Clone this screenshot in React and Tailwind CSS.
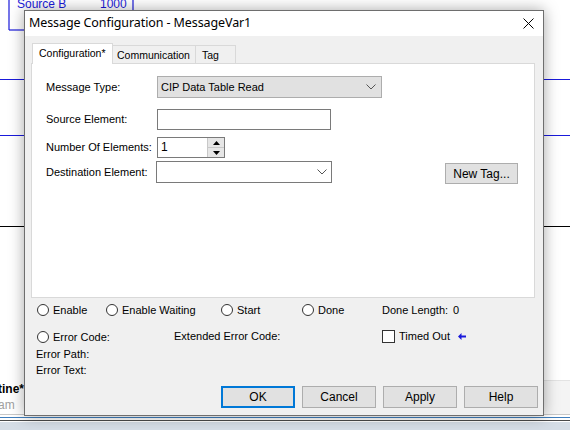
import React from 'react';

const Radio = () => (
  <span className="inline-block w-[12px] h-[12px] rounded-full border border-[#333] bg-white shrink-0" />
);

const Chevron = () => (
  <svg width="10" height="6" viewBox="0 0 10 6" className="shrink-0">
    <path d="M0.5 0.5 L5 5 L9.5 0.5" fill="none" stroke="#555" strokeWidth="1" />
  </svg>
);

const Btn = ({ children, focused }) => (
  <button
    className={`w-[74px] h-[22px] bg-[#e1e1e1] text-[12px] text-black ${
      focused ? 'border-2 border-[#0078d7]' : 'border border-[#adadad]'
    }`}
  >
    {children}
  </button>
);

const Background = () => (
  <>
    <svg className="absolute inset-0" width="570" height="430">
      <line x1="9" y1="0" x2="9" y2="30" stroke="#1a1adb" strokeWidth="1.2" />
      <line x1="9" y1="30" x2="30" y2="30" stroke="#1a1adb" strokeWidth="1.2" />
      <line x1="133" y1="0" x2="133" y2="12" stroke="#1a1adb" strokeWidth="1.2" />
      <line x1="0" y1="79.5" x2="570" y2="79.5" stroke="#1a1adb" strokeWidth="1" />
      <line x1="0" y1="135.5" x2="570" y2="135.5" stroke="#1a1adb" strokeWidth="1" />
      <line x1="0" y1="226.5" x2="570" y2="226.5" stroke="#000" strokeWidth="1" />
      <line x1="543" y1="380.5" x2="570" y2="380.5" stroke="#e3e3e3" strokeWidth="1" />
      <rect x="543" y="381" width="27" height="33" fill="#f4f4f4" />
      <line x1="0" y1="414.5" x2="570" y2="414.5" stroke="#c8c8c8" strokeWidth="1" />
      <line x1="0" y1="417.5" x2="570" y2="417.5" stroke="#3f7ebd" strokeWidth="1" />
      <line x1="0" y1="420.5" x2="570" y2="420.5" stroke="#4a4a4a" strokeWidth="1" />
      <rect x="0" y="422" width="570" height="8" fill="#d5dde6" />
    </svg>
    <div className="absolute left-[17px] top-[-5px] text-[12px] text-[#1a1adb] font-['Liberation_Sans',sans-serif]">Source B</div>
    <div className="absolute left-[100px] top-[-5px] text-[12px] text-[#1a1adb] font-['Liberation_Sans',sans-serif]">1000</div>
    <div className="absolute left-[-2px] top-[380px] text-[12px] font-bold text-black font-['Liberation_Sans',sans-serif]">tine*</div>
    <div className="absolute left-[-2px] top-[396px] text-[12px] text-[#a0a0a0] font-['Liberation_Sans',sans-serif]">am</div>
  </>
);

export default function App() {
  return (
    <div className="relative w-[570px] h-[430px] bg-white overflow-hidden font-['Liberation_Sans',sans-serif] text-[11px] text-black">
      <Background />

      <div className="absolute left-[24px] top-[10px] w-[520px] h-[406px] border border-[#6e6e6e] bg-[#f0f0f0] flex flex-col shadow-[0_0_14px_rgba(0,0,0,0.35)]">
        {/* title bar */}
        <div className="h-[25px] bg-white flex items-center justify-between pl-[4px] pr-[9px]">
          <span className="text-[12.5px] font-['Noto_Sans',sans-serif] tracking-[-0.1px]">Message Configuration - MessageVar1</span>
          <svg width="11" height="11" viewBox="0 0 11 11">
            <path d="M0.5 0.5 L10.5 10.5 M10.5 0.5 L0.5 10.5" stroke="#000" strokeWidth="1" />
          </svg>
        </div>

        {/* tabs */}
        <div className="mt-[7px] ml-[7px] flex items-end h-[20px] text-[10.5px]">
          <div className="relative z-10 w-[81px] h-[21px] -mb-px pl-[6px] pt-[2px] bg-white border border-b-0 border-[#d9d9d9] whitespace-nowrap">
            Configuration*
          </div>
          <div className="w-[84px] h-[18px] -ml-px pl-[4px] pt-[2px] border border-b-0 border-[#d9d9d9] bg-[#f0f0f0] whitespace-nowrap">
            Communication
          </div>
          <div className="w-[41px] h-[18px] -ml-px pl-[6px] pt-[2px] border border-b-0 border-[#d9d9d9] bg-[#f0f0f0]">
            Tag
          </div>
        </div>

        {/* panel */}
        <div className="ml-[6px] mr-[8px] h-[235px] bg-white border border-[#d9d9d9] pl-[14px] pt-[12px] flex flex-col">
          <div className="flex items-center h-[22px]">
            <span className="w-[111px]">Message Type:</span>
            <div className="w-[225px] h-[22px] bg-[#e1e1e1] border border-[#adadad] flex items-center justify-between pl-[3px] pr-[5px]">
              <span>CIP Data Table Read</span>
              <Chevron />
            </div>
          </div>

          <div className="flex items-center h-[21px] mt-[11px]">
            <span className="w-[111px]">Source Element:</span>
            <div className="w-[174px] h-[21px] bg-white border border-[#7a7a7a]" />
          </div>

          <div className="flex items-center h-[21px] mt-[7px]">
            <span className="w-[111px]">Number Of Elements:</span>
            <div className="w-[68px] h-[21px] bg-white border border-[#7a7a7a] flex">
              <span className="flex-1 pl-[3px] text-[12px] leading-[19px]">1</span>
              <div className="w-[17px] flex flex-col border-l border-[#c8c8c8]">
                <div className="flex-1 bg-[#e6e6e6] border-b border-[#c8c8c8] flex items-center justify-center">
                  <svg width="7" height="4" viewBox="0 0 7 4"><path d="M3.5 0 L7 4 L0 4 Z" fill="#000" /></svg>
                </div>
                <div className="flex-1 bg-[#e6e6e6] flex items-center justify-center">
                  <svg width="7" height="4" viewBox="0 0 7 4"><path d="M0 0 L7 0 L3.5 4 Z" fill="#000" /></svg>
                </div>
              </div>
            </div>
          </div>

          <div className="flex items-center h-[22px] mt-[3px]">
            <span className="w-[110px]">Destination Element:</span>
            <div className="w-[176px] h-[22px] bg-white border border-[#7a7a7a] flex items-center justify-end pr-[4px]">
              <Chevron />
            </div>
            <div className="ml-auto mr-[16px] mt-[3px] w-[73px] h-[21px] bg-[#e1e1e1] border border-[#adadad] flex items-center justify-center text-[12px]">
              New Tag...
            </div>
          </div>
        </div>

        {/* status */}
        <div className="pl-[12px] mt-[6px] flex items-center h-[12px]">
          <div className="w-[69px] flex items-center gap-[4px]"><Radio /><span>Enable</span></div>
          <div className="w-[115px] flex items-center gap-[4px]"><Radio /><span>Enable Waiting</span></div>
          <div className="w-[81px] flex items-center gap-[4px]"><Radio /><span>Start</span></div>
          <div className="w-[80px] flex items-center gap-[4px]"><Radio /><span>Done</span></div>
          <span className="w-[71px]">Done Length:</span>
          <span>0</span>
        </div>

        <div className="pl-[12px] mt-[13px] flex items-center h-[14px]">
          <div className="w-[137px] flex items-center gap-[4px] mt-[2px]"><Radio /><span>Error Code:</span></div>
          <span className="w-[208px]">Extended Error Code:</span>
          <span className="w-[13px] h-[13px] border border-[#333] bg-white shrink-0" />
          <span className="ml-[4px]">Timed Out</span>
          <svg className="ml-[8px]" width="8" height="7" viewBox="0 0 8 7">
            <path d="M0 3.5 L3.5 0 L3.5 2.5 L8 2.5 L8 4.5 L3.5 4.5 L3.5 7 Z" fill="#1a1adb" />
          </svg>
        </div>

        <div className="pl-[11px] mt-[3px] leading-[16px]">Error Path:</div>
        <div className="pl-[11px] leading-[16px]">Error Text:</div>

        <div className="mt-auto mb-[7px] pr-[5px] flex justify-end gap-[7px]">
          <Btn focused>OK</Btn>
          <Btn>Cancel</Btn>
          <Btn>Apply</Btn>
          <Btn>Help</Btn>
        </div>
      </div>
    </div>
  );
}
